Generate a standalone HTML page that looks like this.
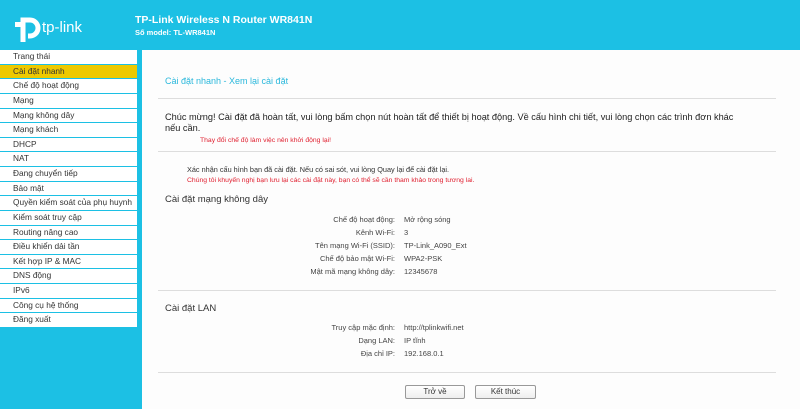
<!DOCTYPE html>
<html><head><meta charset="utf-8"><style>
*{margin:0;padding:0;box-sizing:border-box}
body{width:800px;height:409px;background:#1cc0e4;font-family:"Liberation Sans",Arial,sans-serif;position:relative;overflow:hidden;color:#333}
.a{position:absolute;white-space:nowrap}
.menu{position:absolute;left:0;top:50px;width:137px}
.menu div{height:14.63px;background:#fff;border-bottom:1.5px solid #1cc0e4;font-size:8.3px;padding-left:13px;line-height:13.5px;color:#333;white-space:nowrap;overflow:hidden}
.menu div.sel{background:#eec900}
.main{position:absolute;left:142px;top:50px;width:658px;height:359px;background:#fdfdfd}
.hr{position:absolute;left:16px;width:618px;height:1px;background:#ddd}
.lbl{position:absolute;right:405px;font-size:7.5px;color:#444;text-align:right}
.val{position:absolute;left:262px;font-size:7.5px;color:#444}
.btn{position:absolute;top:335px;height:14px;border:1px solid #999;border-radius:2px;background:linear-gradient(#fff,#eee);font-size:8px;text-align:center;line-height:12px;color:#333}
</style></head><body>
<svg class="a" style="left:13px;top:13px" width="30" height="30" viewBox="0 0 30 30"><path d="M2 11.5 H10 V29 M10 11.5 V7 H17 A8 8 0 0 1 17 23 H15" fill="none" stroke="#fff" stroke-width="5"/></svg>
<div class="a" style="left:42px;top:19px;color:#fff;font-size:15px">tp-link</div>
<div class="a" style="left:135px;top:14px;color:#fff;font-size:10.5px;font-weight:bold">TP-Link Wireless N Router WR841N</div>
<div class="a" style="left:135px;top:28px;color:#fff;font-size:7.5px;font-weight:bold">Số model: TL-WR841N</div>
<div class="menu">
<div>Trang thái</div><div class="sel">Cài đặt nhanh</div><div>Chế độ hoạt động</div><div>Mạng</div><div>Mạng không dây</div><div>Mạng khách</div><div>DHCP</div><div>NAT</div><div>Đang chuyển tiếp</div><div>Bảo mật</div><div>Quyền kiểm soát của phụ huynh</div><div>Kiểm soát truy cập</div><div>Routing nâng cao</div><div>Điều khiển dải tần</div><div>Kết hợp IP &amp; MAC</div><div>DNS động</div><div>IPv6</div><div>Công cụ hệ thống</div><div>Đăng xuất</div>
</div>
<div class="main">
<div class="a" style="left:23px;top:26px;font-size:9px;color:#2bb8dc">Cài đặt nhanh - Xem lại cài đặt</div>
<div class="hr" style="top:48px"></div>
<div class="a" style="left:23px;top:62px;font-size:9.2px;color:#222;line-height:11px">Chúc mừng! Cài đặt đã hoàn tất, vui lòng bấm chọn nút hoàn tất để thiết bị hoạt động. Về cấu hình chi tiết, vui lòng chọn các trình đơn khác<br>nếu cần.</div>
<div class="a" style="left:58px;top:87px;font-size:6.8px;color:#e02030">Thay đổi chế độ làm việc nên khởi động lại!</div>
<div class="hr" style="top:101px"></div>
<div class="a" style="left:45px;top:115px;font-size:7.3px;color:#333">Xác nhận cấu hình bạn đã cài đặt. Nếu có sai sót, vui lòng Quay lại để cài đặt lại.</div>
<div class="a" style="left:45px;top:127px;font-size:6.8px;color:#e02030">Chúng tôi khuyến nghị bạn lưu lại các cài đặt này, bạn có thể sẽ cần tham khảo trong tương lai.</div>
<div class="a" style="left:23px;top:144px;font-size:9.5px;color:#333">Cài đặt mạng không dây</div>
<div class="lbl" style="top:165px">Chế độ hoạt động:</div><div class="val" style="top:165px">Mở rộng sóng</div>
<div class="lbl" style="top:178px">Kênh Wi-Fi:</div><div class="val" style="top:178px">3</div>
<div class="lbl" style="top:191px">Tên mạng Wi-Fi (SSID):</div><div class="val" style="top:191px">TP-Link_A090_Ext</div>
<div class="lbl" style="top:204px">Chế độ bảo mật Wi-Fi:</div><div class="val" style="top:204px">WPA2-PSK</div>
<div class="lbl" style="top:217px">Mật mã mạng không dây:</div><div class="val" style="top:217px">12345678</div>
<div class="hr" style="top:240px"></div>
<div class="a" style="left:23px;top:253px;font-size:9.5px;color:#333">Cài đặt LAN</div>
<div class="lbl" style="top:273px">Truy cập mặc định:</div><div class="val" style="top:273px">http://tplinkwifi.net</div>
<div class="lbl" style="top:286px">Dạng LAN:</div><div class="val" style="top:286px">IP tĩnh</div>
<div class="lbl" style="top:299px">Địa chỉ IP:</div><div class="val" style="top:299px">192.168.0.1</div>
<div class="hr" style="top:322px"></div>
<div class="btn" style="left:263px;width:60px">Trở về</div>
<div class="btn" style="left:333px;width:61px">Kết thúc</div>
</div>
</body></html>
